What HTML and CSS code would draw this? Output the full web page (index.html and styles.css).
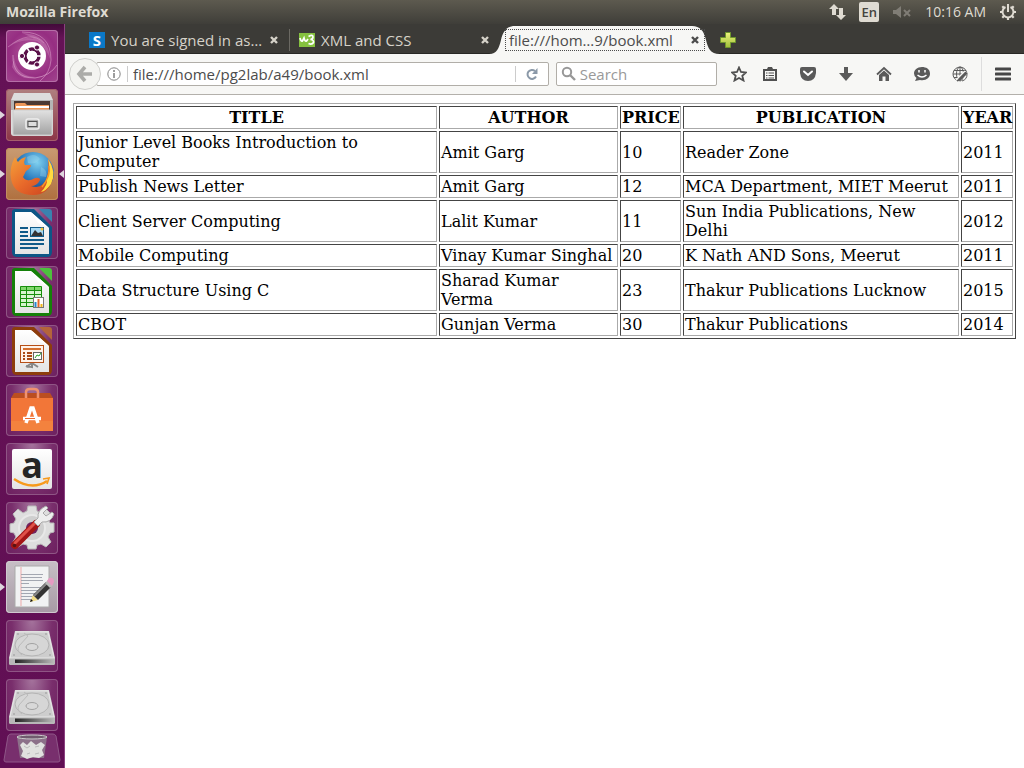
FILE: index.html
```html
<!DOCTYPE html>
<html lang="en">
<head>
<meta charset="utf-8">
<title>Mozilla Firefox</title>
<link rel="stylesheet" href="styles.css">
</head>
<body>
<svg class="defs" aria-hidden="true">
  <defs>
    <linearGradient id="steel" x1="0" y1="0" x2="0" y2="1"><stop offset="0" stop-color="#e2e2e2"/><stop offset="1" stop-color="#a2a2a2"/></linearGradient>
    <linearGradient id="paper" x1="0" y1="0" x2="0" y2="1"><stop offset="0" stop-color="#ffffff"/><stop offset="1" stop-color="#e4e4e4"/></linearGradient>
    <linearGradient id="plus" x1="0" y1="0" x2="0" y2="1"><stop offset="0" stop-color="#eef27e"/><stop offset="1" stop-color="#9fc038"/></linearGradient>
    <linearGradient id="dark" x1="0" y1="0" x2="1" y2="0"><stop offset="0" stop-color="#222"/><stop offset="1" stop-color="#b5b5b5"/></linearGradient>
    <linearGradient id="fox" x1="0" y1="0" x2="1" y2="1"><stop offset="0" stop-color="#f4a13a"/><stop offset=".5" stop-color="#e8692a"/><stop offset="1" stop-color="#c9411e"/></linearGradient>
    <radialGradient id="globe" cx=".6" cy=".25" r=".8"><stop offset="0" stop-color="#7fd0ef"/><stop offset=".5" stop-color="#2f7fc0"/><stop offset="1" stop-color="#14306f"/></radialGradient>
    <symbol id="drive" viewBox="0 0 52 52">
      <path d="M9 11H43L49 38V43Q49 45 47 45H5Q3 45 3 43V38Z" fill="#d9d9d9"/>
      <path d="M10 12H42L48 38H4Z" fill="#cdcdcd" stroke="#e6e6e6"/>
      <path d="M3 38.500H49V43Q49 45 47 45H5Q3 45 3 43Z" fill="#b8b8b8"/>
      <path d="M9 39.500H47V43H9Z" fill="url(#dark)"/>
      <ellipse cx="26" cy="25" rx="17" ry="11" fill="#d6d6d6" stroke="#b4b4b4"/>
      <ellipse cx="26" cy="27" rx="6" ry="3.500" fill="#d8d8d8" stroke="#a2a2a2"/>
      <path d="M18 13L22 16L13 26Q10 31 16 35" fill="none" stroke="#bbb"/>
      <path d="M7 35h2M43 35h2M11 14h2M39 14h2" stroke="#999"/>
    </symbol>
    <symbol id="close" viewBox="0 0 10 10"><path d="M2 2L8 8M8 2L2 8" stroke="currentColor" stroke-width="2.400"/></symbol>
  </defs>
</svg>

<header class="panel">
  <span class="app-name">Mozilla Firefox</span>
  <div class="indicators">
    <button class="plain" aria-label="Network"><svg width="18" height="18" viewBox="0 0 18 18" fill="#dfdbd2"><path d="M6 1L11 6H8V12H4V6H1Z"/><path d="M13 17L8 12H11V5H15V12H18Z"/></svg></button>
    <button class="plain lang">En</button>
    <button class="plain" aria-label="Sound muted"><svg width="20" height="16" viewBox="0 0 20 16" fill="#807d76"><path d="M1 6H4L9 2V14L4 10H1Z"/><path d="M12 6L18 12M18 6L12 12" stroke="#807d76" stroke-width="2"/></svg></button>
    <time class="clock">10:16 AM</time>
    <button class="plain" aria-label="System"><svg width="18" height="18" viewBox="0 0 18 18" fill="none" stroke="#dfdbd2"><path d="M6.500 4A5.500 5.500 0 1 0 11.500 4" stroke-width="2"/><path d="M9 1V9" stroke-width="2"/><path d="M1 9H3M15 9H17M3.300 3.300L5 5M14.700 3.300L13 5M3.300 14.700L5 13M14.700 14.700L13 13M9 15V17" stroke-width="2.200"/></svg></button>
  </div>
</header>

<div class="desktop">
  <nav class="launcher" aria-label="Launcher">
    <button class="tile dash" aria-label="Search your computer"><svg viewBox="0 0 52 52">
      <g fill="none" stroke="#d99bc8"><path d="M16 2Q45 2 45 30Q44 43 34 51" opacity=".6"/><path d="M2 17Q24-1 38 13" opacity=".5"/><path d="M7 25Q6 48 29 48Q44 46 51 35" opacity=".7"/></g>
      <path d="M16 3Q43 4 44 29Q39 12 16 3ZM8 27Q10 46 30 47Q14 52 6 37ZM3 17Q17 2 35 12Q16 7 3 17Z" fill="#d99bc8" opacity=".35"/>
      <circle cx="26" cy="26" r="14" fill="#fff"/><circle cx="26" cy="26" r="7" fill="none" stroke="#5a1049" stroke-width="3.400"/>
      <path d="M26 26L39 26M26 26L20 16M26 26L20 36" stroke="#fff" stroke-width="1.500"/><circle cx="26" cy="26" r="5.200" fill="#fff"/>
      <g fill="#5a1049" stroke="#fff"><circle cx="16" cy="26" r="2.600"/><circle cx="31" cy="17.500" r="2.600"/><circle cx="31" cy="34.500" r="2.600"/></g></svg></button>
    <button class="tile files running" aria-label="Files"><svg viewBox="0 0 52 52">
      <path d="M8 4H44L47 11V44Q47 47 44 47H8Q5 47 5 44V11Z" fill="#ddd"/><path d="M5 11H47V21H5Z" fill="#b4b4b4"/><path d="M8 12H44V21H8Z" fill="#4b3932"/><path d="M9 15Q9 14 11 14H19L21 16H43V21H9Z" fill="#ec9758"/><path d="M10 17H43V19H10Z" fill="#fff"/>
      <rect x="7" y="21" width="39" height="25" rx="1" fill="url(#steel)" stroke="#ccc"/><rect x="20" y="30" width="13" height="10" rx="2" fill="#b0b0b0" stroke="#eee" stroke-width="1.500"/><rect x="22" y="32.500" width="9" height="5" fill="#ddd" stroke="#555"/></svg></button>
    <button class="tile firefox running focused" aria-label="Firefox"><svg viewBox="0 0 52 52">
      <circle cx="27" cy="25" r="21" fill="url(#globe)"/><path d="M21 9Q29 4 34 11Q29 17 22 15ZM35 19Q42 22 40 29L34 28Z" fill="#a4dcf0" opacity=".35"/>
      <path d="M42 11Q49 21 47 30Q43 47 27 47Q8 47 5 31Q3 20 9 9Q11 13 12 14Q15 10 20 9Q17 14 19 17H25Q25 20 20 23L17 29Q21 35 29 30Q34 29 34 32Q31 38 25 38Q37 42 41 29Q43 21 42 11Z" fill="url(#fox)"/>
      <path d="M42 11Q51 24 45 36Q40 43 35 44Q42 37 41 30Q45 19 42 11Z" fill="#ffdc40"/><path d="M43 18Q45 28 36 39" stroke="#f79625" fill="none" stroke-width="1.500"/></svg></button>
    <button class="tile" aria-label="LibreOffice Writer"><svg viewBox="0 0 52 52">
      <path d="M9 2H28L46 20V45Q46 50 41 50H11Q6 50 6 45V5Q6 2 9 2Z" fill="#0d5686"/><path d="M33 2H43Q46 2 46 5V15Z" fill="#3a82af"/>
      <path d="M9 5H25L43 21V47H9Z" fill="url(#paper)"/><path d="M25 5L43 21L32 16Z" fill="#fff"/>
      <path d="M14 21H22M14 25H22M14 29H22M14 33H38M14 37H38M14 41H32" stroke="#115b89" stroke-width="2"/><rect x="24.500" y="20.500" width="13" height="9" fill="#a7d9f4" stroke="#115b89"/><path d="M25 29L29 23L32 26L35 25L37 29Z" fill="#333"/><circle cx="36" cy="22" r="1.500" fill="#f2c23c"/></svg></button>
    <button class="tile" aria-label="LibreOffice Calc"><svg viewBox="0 0 52 52">
      <path d="M9 2H28L46 20V45Q46 50 41 50H11Q6 50 6 45V5Q6 2 9 2Z" fill="#158009"/><path d="M33 2H43Q46 2 46 5V15Z" fill="#4dc13d"/>
      <path d="M9 5H25L43 21V47H9Z" fill="url(#paper)"/><path d="M25 5L43 21L32 16Z" fill="#fff"/>
      <path d="M14.500 20.500H35.500V40.500H14.500Z" fill="#d7f5cf"/><path d="M14.500 20.500H35.500V24H14.500Z" fill="#82d86d"/><path d="M14.500 20.500H35.500V40.500H14.500ZM14 24.500H36M14 28.500H36M14 32.500H36M14 36.500H36M20.500 20V41M28.500 20V41" fill="none" stroke="#178f0c"/><rect x="27.500" y="31.500" width="10" height="10" fill="#fff" stroke="#777"/><path d="M28.500 36h2v5h-2z" fill="#2587cb"/><path d="M31.500 33h2v8h-2z" fill="#e56726"/><path d="M34.500 38h2v3h-2z" fill="#f0b519"/></svg></button>
    <button class="tile" aria-label="LibreOffice Impress"><svg viewBox="0 0 52 52">
      <path d="M9 2H28L46 20V45Q46 50 41 50H11Q6 50 6 45V5Q6 2 9 2Z" fill="#8d3d0c"/><path d="M33 2H43Q46 2 46 5V15Z" fill="#b4643b"/>
      <path d="M9 5H25L43 21V47H9Z" fill="url(#paper)"/><path d="M25 5L43 21L32 16Z" fill="#fff"/>
      <path d="M26 38V42L20 41M26 38L20 42M26 38L32 42" stroke="#888" stroke-width="2" fill="none"/><rect x="14.500" y="20.500" width="23" height="17" fill="#fff2e9" stroke="#b64f17"/><path d="M17 24H35" stroke="#d46f2f" stroke-width="2"/><path d="M17 28H19M21 28H26M17 31H19M21 31H26M17 34H19M21 34H26" stroke="#a94a17" stroke-width="2"/><rect x="27.500" y="27.500" width="8" height="7" fill="#fff" stroke="#666"/><path d="M29 33L31 30L33 31L35 28" fill="none" stroke="#29a329"/></svg></button>
    <button class="tile" aria-label="Ubuntu Software"><svg viewBox="0 0 52 52">
      <path d="M5 14L8 9H44L47 14Z" fill="#bb4e20"/><path d="M5 14H47V47H5Z" fill="#f27638"/><path d="M5 37H47V47H5Z" fill="#f3823e"/><path d="M20 14V8Q20 5 24 5H28Q32 5 32 8V14" fill="none" stroke="#f09270" stroke-width="2.500"/>
      <path d="M20 39L25 24H27L32 39" fill="none" stroke="#fff" stroke-width="3.500"/><path d="M17 34.500H35" stroke="#fff" stroke-width="3.500"/><path d="M19 34.500H29" stroke="#ed6b31" stroke-width="1"/></svg></button>
    <button class="tile amazon" aria-label="Amazon"><span class="amazon-letter">a</span><svg class="smile" viewBox="0 0 40 12" aria-hidden="true"><path d="M2 3Q20 15 35 5" fill="none" stroke="#f79a1c" stroke-width="2.500"/><path d="M31 3L37 2L35 8" fill="none" stroke="#f79a1c" stroke-width="1.700"/></svg></button>
    <button class="tile" aria-label="System Settings"><svg viewBox="0 0 52 52">
      <path d="M22 4H30L31 9L35 11L40 7L45 12L42 17L44 21H48V30L44 31L42 35L45 40L40 45L35 42L31 43L30 47H22L21 43L17 42L12 45L7 40L10 35L8 31L4 30V22L8 21L10 17L7 12L12 7L17 11L21 9Z" fill="#dedede" stroke="#bbb"/><circle cx="26" cy="26" r="13" fill="#cfcfcf" stroke="#e8e8e8" stroke-width="2"/><circle cx="26" cy="26" r="6" fill="#702460"/>
      <path d="M9 43L30 22" stroke="#a41616" stroke-width="8" stroke-linecap="round"/><path d="M9 41L29 21" stroke="#df5149" stroke-width="3" stroke-linecap="round"/><circle cx="8.500" cy="43.500" r="1.800" fill="#571414"/><path d="M28 20L32 16Q31 8 40 4L42 6L37 11L40 14L46 10L48 12Q45 21 36 20L32 24Z" fill="#eee" stroke="#aaa"/></svg></button>
    <button class="tile editor running" aria-label="Text Editor"><svg viewBox="0 0 52 52">
      <path d="M9 5H43V46H9Z" fill="#f1f2f3" stroke="#aaa"/><path d="M15 6V45" stroke="#eda9a9"/><path d="M15 13.500H37M15 16.500H36M15 19.500H37M15 22.500H23M15 26.500H36M15 29.500H33M15 32.500H31M15 35.500H27M15 38.500H28" stroke="#a3a7b1"/>
      <path d="M24 41L27 34L32 39Z" fill="#f2dc87"/><path d="M24 41L25 38L27 40Z" fill="#111"/><path d="M27 34L40 21L45 26L32 39Z" fill="#333"/><path d="M28 35L41 22" stroke="#888" stroke-width="2"/><path d="M39 22L42 19L47 24L44 27Z" fill="#bbb"/><path d="M41 20L43 17Q48 16 48 21L46 25Z" fill="#e69bc3"/></svg></button>
    <button class="tile" aria-label="Volume 1"><svg><use href="#drive"/></svg></button>
    <button class="tile" aria-label="Volume 2"><svg><use href="#drive"/></svg></button>
    <button class="trash" aria-label="Trash"><svg viewBox="0 0 58 30">
      <path d="M8 1H50Q52 1 53 3L57 27Q57 29 55 29H3Q1 29 1 27L5 3Q6 1 8 1Z" fill="#782f6d" stroke="#8f5788"/><path d="M14 4H44L41 25H17Z" fill="#8c7089"/><path d="M17 12L20 9L24 12L28 8L33 12L38 9L42 12L39 17L41 22L36 25L30 24L24 26L18 23L20 18Z" fill="#e1e1df"/><path d="M21 13L24 15L27 13M32 14L36 13M24 21L27 20M32 21L36 20" fill="none" stroke="#bbb"/><ellipse cx="29" cy="4" rx="15" ry="2" fill="#705c6e" stroke="#ccc"/></svg></button>
  </nav>

  <div class="browser">
    <div class="tabs" role="tablist">
      <div class="tab first">
        <span class="favicon blue" aria-hidden="true">S</span>
        <button class="plain tab-label" role="tab">You are signed in as…</button>
        <button class="plain close" aria-label="Close tab"><svg width="10" height="10"><use href="#close"/></svg></button>
      </div>
      <div class="tab second">
        <svg class="favicon" viewBox="0 0 16 16" aria-hidden="true"><path d="M0 1H16V15H0Z" fill="#85c13f"/><path d="M1 6Q2 10 3.500 9L5 6Q6 10 7.500 9L9 7" fill="none" stroke="#fff" stroke-width="1.700"/><path d="M9.500 4.500Q14 2 14 5Q14 7 11.500 7.500Q15 8 14.500 10.500Q13 13 9.500 11.500" fill="none" stroke="#fff" stroke-width="1.700"/></svg>
        <button class="plain tab-label" role="tab">XML and CSS</button>
        <button class="plain close" aria-label="Close tab"><svg width="10" height="10"><use href="#close"/></svg></button>
      </div>
      <div class="tab active">
        <svg class="tab-shape" viewBox="0 0 232 28" preserveAspectRatio="none" aria-hidden="true"><path d="M0 28C8 28 10 22 12 14C14 5 18 0 26 0H203C211 0 215 5 217 14C219 22 221 28 231 28Z" fill="#f7f7f5"/></svg>
        <div class="focus-box">
          <button class="plain tab-label" role="tab" aria-selected="true">file:///hom…9/book.xml</button>
          <button class="plain close" aria-label="Close tab"><svg width="10" height="10"><use href="#close"/></svg></button>
        </div>
      </div>
      <button class="plain new-tab" aria-label="New tab"><svg width="16" height="16" viewBox="0 0 16 16"><path d="M5.500.5H10.500V5.500H15.500V10.500H10.500V15.500H5.500V10.500H.5V5.500H5.500Z" fill="url(#plus)" stroke="#6f972c"/></svg></button>
    </div>

    <div class="toolbar">
      <button class="plain back" aria-label="Back"><svg width="18" height="18" viewBox="0 0 18 18"><path d="M9 2L3 9L9 16M3 9H16" fill="none" stroke="#acaca9" stroke-width="3.600"/></svg></button>
      <div class="url-box">
        <svg width="14" height="14" viewBox="0 0 14 14" fill="none" stroke="#858585" aria-hidden="true"><circle cx="7" cy="7" r="6.200"/><path d="M7 6V11M7 3V5" stroke-width="1.600"/></svg>
        <div class="url-field"><input type="text" aria-label="Address" value="file:///home/pg2lab/a49/book.xml"></div>
        <button class="plain reload" aria-label="Reload"><svg width="14" height="14" viewBox="0 0 14 14"><path d="M10 4A4.500 4.500 0 1 0 11 9.500" fill="none" stroke="#8b99a8" stroke-width="2"/><path d="M12.500 1V7H7Z" fill="#8b99a8"/></svg></button>
      </div>
      <div class="search-box">
        <svg width="16" height="16" viewBox="0 0 16 16" fill="none" stroke="#989898" aria-hidden="true"><circle cx="6" cy="6" r="4.200" stroke-width="2"/><path d="M9 9L14 14" stroke-width="2.400"/></svg>
        <input class="search" type="search" aria-label="Search" placeholder="Search">
      </div>
      <div class="actions">
        <button class="plain star" aria-label="Bookmark"><svg viewBox="0 0 16 16"><path d="M8 1.500L10 6L15 6.500L11.300 9.800L12.500 14.500L8 12L3.500 14.500L4.700 9.800L1 6.500L6 6Z" fill="none" stroke="#505050" stroke-width="1.800"/></svg></button>
        <button class="plain" aria-label="Bookmarks menu"><svg viewBox="0 0 16 16"><path d="M2 4H14V14H2Z" fill="none" stroke="#505050" stroke-width="2"/><path d="M5 3L6 1H10L11 3V5H5Z" fill="#505050"/><path d="M4 7H5.500M6.500 7H12M4 9.500H5.500M6.500 9.500H12M4 12H5.500M6.500 12H12" stroke="#505050"/></svg></button>
        <button class="plain" aria-label="Pocket"><svg viewBox="0 0 16 16"><path d="M2 1H14Q16 1 16 3V7Q15 15 8 15Q1 15 0 7V3Q0 1 2 1Z" fill="#5a5a5a"/><path d="M4 5.500L8 9L12 5.500" fill="none" stroke="#fff" stroke-width="2" stroke-linecap="round"/></svg></button>
        <button class="plain" aria-label="Downloads"><svg viewBox="0 0 16 16"><path d="M6 1H10V7H15L8 15L1 7H6Z" fill="#5a5a5a"/></svg></button>
        <button class="plain" aria-label="Home"><svg viewBox="0 0 16 16"><path d="M1 8.500L8 2L15 8.500" fill="none" stroke="#5a5a5a" stroke-width="1.800"/><path d="M3 9L8 4.500L13 9V15H9.500V10.500H6.500V15H3Z" fill="#5a5a5a"/></svg></button>
        <button class="plain" aria-label="Chat"><svg viewBox="0 0 16 16"><path d="M8 1C3 1 0 4 0 7.500Q0 10 2.500 12L1 15L6 14C12 15 16 12 16 7.500C16 3 12 1 8 1Z" fill="#5a5a5a"/><path d="M5 4V6.500M11 4V6.500M3.500 9Q8 13 12.500 9" fill="none" stroke="#fff" stroke-width="1.500"/></svg></button>
        <button class="plain" aria-label="Web tools"><svg viewBox="0 0 16 16" fill="none" stroke="#5a5a5a"><path d="M15 8A7 7 0 1 0 7 15"/><ellipse cx="8" cy="8" rx="3.500" ry="7"/><path d="M8 1V11M1 8H12M2 4.500H14M2 11.500H8M10 15A7 7 0 0 0 15 8"/><path d="M14 6L5 15" stroke="#f7f7f5" stroke-width="4"/><path d="M14.500 6.500L8 13" stroke-width="3"/><path d="M7.500 12L5 15L9 14Z" fill="#5a5a5a"/></svg></button>
      </div>
      <button class="plain menu" aria-label="Menu"><svg width="16" height="16" viewBox="0 0 16 16"><path d="M1 3H15M1 8H15M1 13H15" stroke="#474747" stroke-width="3" stroke-linecap="round"/></svg></button>
    </div>

    <main class="page">
      <table class="books">
        <colgroup><col><col class="c-author"><col class="c-price"><col class="c-publication"><col class="c-year"></colgroup>
        <thead><tr><th>TITLE</th><th>AUTHOR</th><th>PRICE</th><th>PUBLICATION</th><th>YEAR</th></tr></thead>
        <tbody>
          <tr><td>Junior Level Books Introduction to Computer</td><td class="author">Amit Garg</td><td>10</td><td>Reader Zone</td><td>2011</td></tr>
          <tr><td>Publish News Letter</td><td class="author">Amit Garg</td><td>12</td><td>MCA Department, MIET Meerut</td><td>2011</td></tr>
          <tr><td>Client Server Computing</td><td class="author">Lalit Kumar</td><td>11</td><td>Sun India Publications, New Delhi</td><td>2012</td></tr>
          <tr><td>Mobile Computing</td><td class="author">Vinay Kumar Singhal</td><td>20</td><td>K Nath AND Sons, Meerut</td><td>2011</td></tr>
          <tr><td>Data Structure Using C</td><td class="author">Sharad Kumar Verma</td><td>23</td><td>Thakur Publications Lucknow</td><td>2015</td></tr>
          <tr><td>CBOT</td><td class="author">Gunjan Verma</td><td>30</td><td>Thakur Publications</td><td>2014</td></tr>
        </tbody>
      </table>
    </main>
  </div>
</div>
</body>
</html>
```
FILE: styles.css
```css
* { box-sizing: border-box; }
body {
  margin: 0;
  min-height: 100vh;
  display: flex;
  flex-direction: column;
  background: #fff;
  font: 15px/20px "Open Sans", "Noto Sans", sans-serif;
}
.defs { position: absolute; width: 0; height: 0; }
svg { display: block; flex: none; }
.plain {
  border: 0;
  padding: 0;
  background: none;
  color: inherit;
  font: inherit;
  display: flex;
  align-items: center;
  justify-content: center;
}

/* Top panel */
.panel {
  height: 24px;
  flex: none;
  display: flex;
  align-items: center;
  justify-content: space-between;
  padding: 0 7px 0 6px;
  background: linear-gradient(#5d5a4f, #3f3e39);
  color: #dfdbd2;
  font-size: 14px;
}
.app-name { font-weight: 700; }
.indicators { display: flex; align-items: center; gap: 13px; }
.lang {
  width: 20px;
  height: 20px;
  border-radius: 2px;
  background: #dfdbd2;
  color: #45433e;
  font-weight: 600;
  font-size: 13px;
}

.desktop { flex: 1; display: flex; }

/* Launcher */
.launcher {
  width: 65px;
  flex: none;
  display: flex;
  flex-direction: column;
  align-items: center;
  gap: 7px;
  padding-top: 6px;
  background: linear-gradient(#420a3a, #651256 14px, #610f54);
  border-right: 1px solid #8b4080;
}
.tile {
  position: relative;
  width: 52px;
  height: 52px;
  flex: none;
  padding: 0;
  border: 0;
  border-radius: 4px;
  background: radial-gradient(ellipse at 50% 0, #a5749d, #792e6c 55%, #6c205f);
  box-shadow: inset 0 0 0 1px #8f5585;
}
.tile svg { width: 52px; height: 52px; }
.dash { background: radial-gradient(circle at 50% 45%, #b65fa0, #962e82 60%, #a1458e); box-shadow: inset 0 0 0 1px #b56fa7; }
.files { background: linear-gradient(#b08080, #8c3547); box-shadow: inset 0 0 0 1px #a65e6c; }
.firefox { background: linear-gradient(#c99b72, #b0703f); box-shadow: inset 0 0 0 1px #c18d61; }
.editor { background: linear-gradient(#c7bfc6, #a79aa5); box-shadow: inset 0 0 0 1px #d0c8cf; }
.running::before, .focused::after {
  content: "";
  position: absolute;
  top: 22px;
  border: solid transparent;
  border-width: 4px 0;
}
.running::before { left: -6px; border-left: 5px solid #ded5dd; }
.focused::after { right: -6px; border-right: 5px solid #ded5dd; }
.trash {
  width: 58px;
  height: 30px;
  margin-top: -5px;
  padding: 0;
  border: 0;
  background: none;
}
.amazon { padding: 6px; }
.amazon-letter {
  display: block;
  height: 40px;
  border-radius: 2px;
  background: linear-gradient(#fff, #e4e4e4);
  color: #252525;
  font: 700 36px/32px "Open Sans", sans-serif;
}
.tile .smile { position: absolute; left: 6px; bottom: 7px; width: 40px; height: 12px; }

/* Tabs */
.browser { flex: 1; min-width: 0; display: flex; flex-direction: column; }
.tabs {
  height: 30px;
  flex: none;
  display: flex;
  align-items: center;
  padding: 3px 0 0 24px;
  background: #3c3b37;
  border-bottom: 1px solid #282825;
  color: #d6d2c9;
}
.tab { display: flex; align-items: center; gap: 6px; height: 22px; }
.tab-label { flex: 1; min-width: 0; justify-content: flex-start; white-space: nowrap; padding-bottom: 1px; }
.first { width: 201px; padding-right: 10px; border-right: 1px solid #6b6963; }
.second { width: 210px; padding: 0 10px 0 9px; }
.close { width: 10px; height: 20px; }
.favicon { width: 16px; height: 16px; flex: none; }
.blue { background: #0a78c8; color: #fff; font-weight: 700; line-height: 16px; text-align: center; }
.active { position: relative; width: 212px; color: #4c4c4c; padding-left: 5px; }
.tab-shape { position: absolute; left: -11px; top: -3px; width: 232px; height: 28px; }
.focus-box {
  position: relative;
  width: 200px;
  height: 22px;
  display: flex;
  align-items: center;
  padding: 0 4px 0 3px;
  border: 1px dotted #4c4c4c;
}
.new-tab { margin-left: 8px; }

/* Navigation toolbar */
.toolbar {
  height: 41px;
  flex: none;
  display: flex;
  align-items: center;
  padding-left: 4px;
  background: #f7f7f5;
  border-bottom: 1px solid #b3b0ab;
}
.back {
  position: relative;
  z-index: 1;
  width: 32px;
  height: 32px;
  flex: none;
  border: 1px solid #cfcfcc;
  border-radius: 50%;
  background: #f4f4f1;
}
.url-box, .search-box {
  display: flex;
  align-items: center;
  height: 24px;
  border: 1px solid #b1aea8;
  border-radius: 2px;
  background: #fff;
}
.url-box { flex: 454 1 0; margin-left: -5px; padding-left: 10px; min-width: 0; }
.search-box { flex: 160 1 0; margin-left: 7px; padding-left: 4px; gap: 3px; min-width: 0; }
input {
  appearance: none;
  display: block;
  width: 100%;
  min-width: 0;
  height: 22px;
  padding: 0;
  border: 0;
  outline: 0;
  background: none;
  color: #4c4c4c;
  font: inherit;
}
.url-field {
  flex: 1;
  min-width: 0;
  height: 16px;
  display: flex;
  align-items: center;
  margin-left: 6px;
  padding-left: 5px;
  border-left: 1px solid #ccc;
}
.search::placeholder { color: #999; opacity: 1; }
.reload { width: 33px; height: 16px; flex: none; border-left: 1px solid #ccc; }
.actions { flex: none; display: flex; align-items: center; gap: 22px; padding: 0 13px 0 14px; }
.actions svg { width: 16px; height: 16px; }
.star { margin-right: -7px; }
.menu { width: 43px; height: 34px; flex: none; border-left: 1px solid #ddd; }

/* Document */
.page { flex: 1; padding: 8px; }
.books {
  width: 100%;
  table-layout: fixed;
  border: 1px solid;
  border-color: #aaa #444 #444 #aaa;
  border-spacing: 2px;
  color: #000;
  font: 16px/19px "DejaVu Serif", serif;
}
.books th, .books td {
  padding: 1px;
  border: 1px solid;
  border-color: #444 #aaa #aaa #444;
}
.books td { text-align: left; }
.books .author { padding-right: 3px; }
.c-author { width: 179px; }
.c-price { width: 61px; }
.c-publication { width: 276px; }
.c-year { width: 52px; }
```
